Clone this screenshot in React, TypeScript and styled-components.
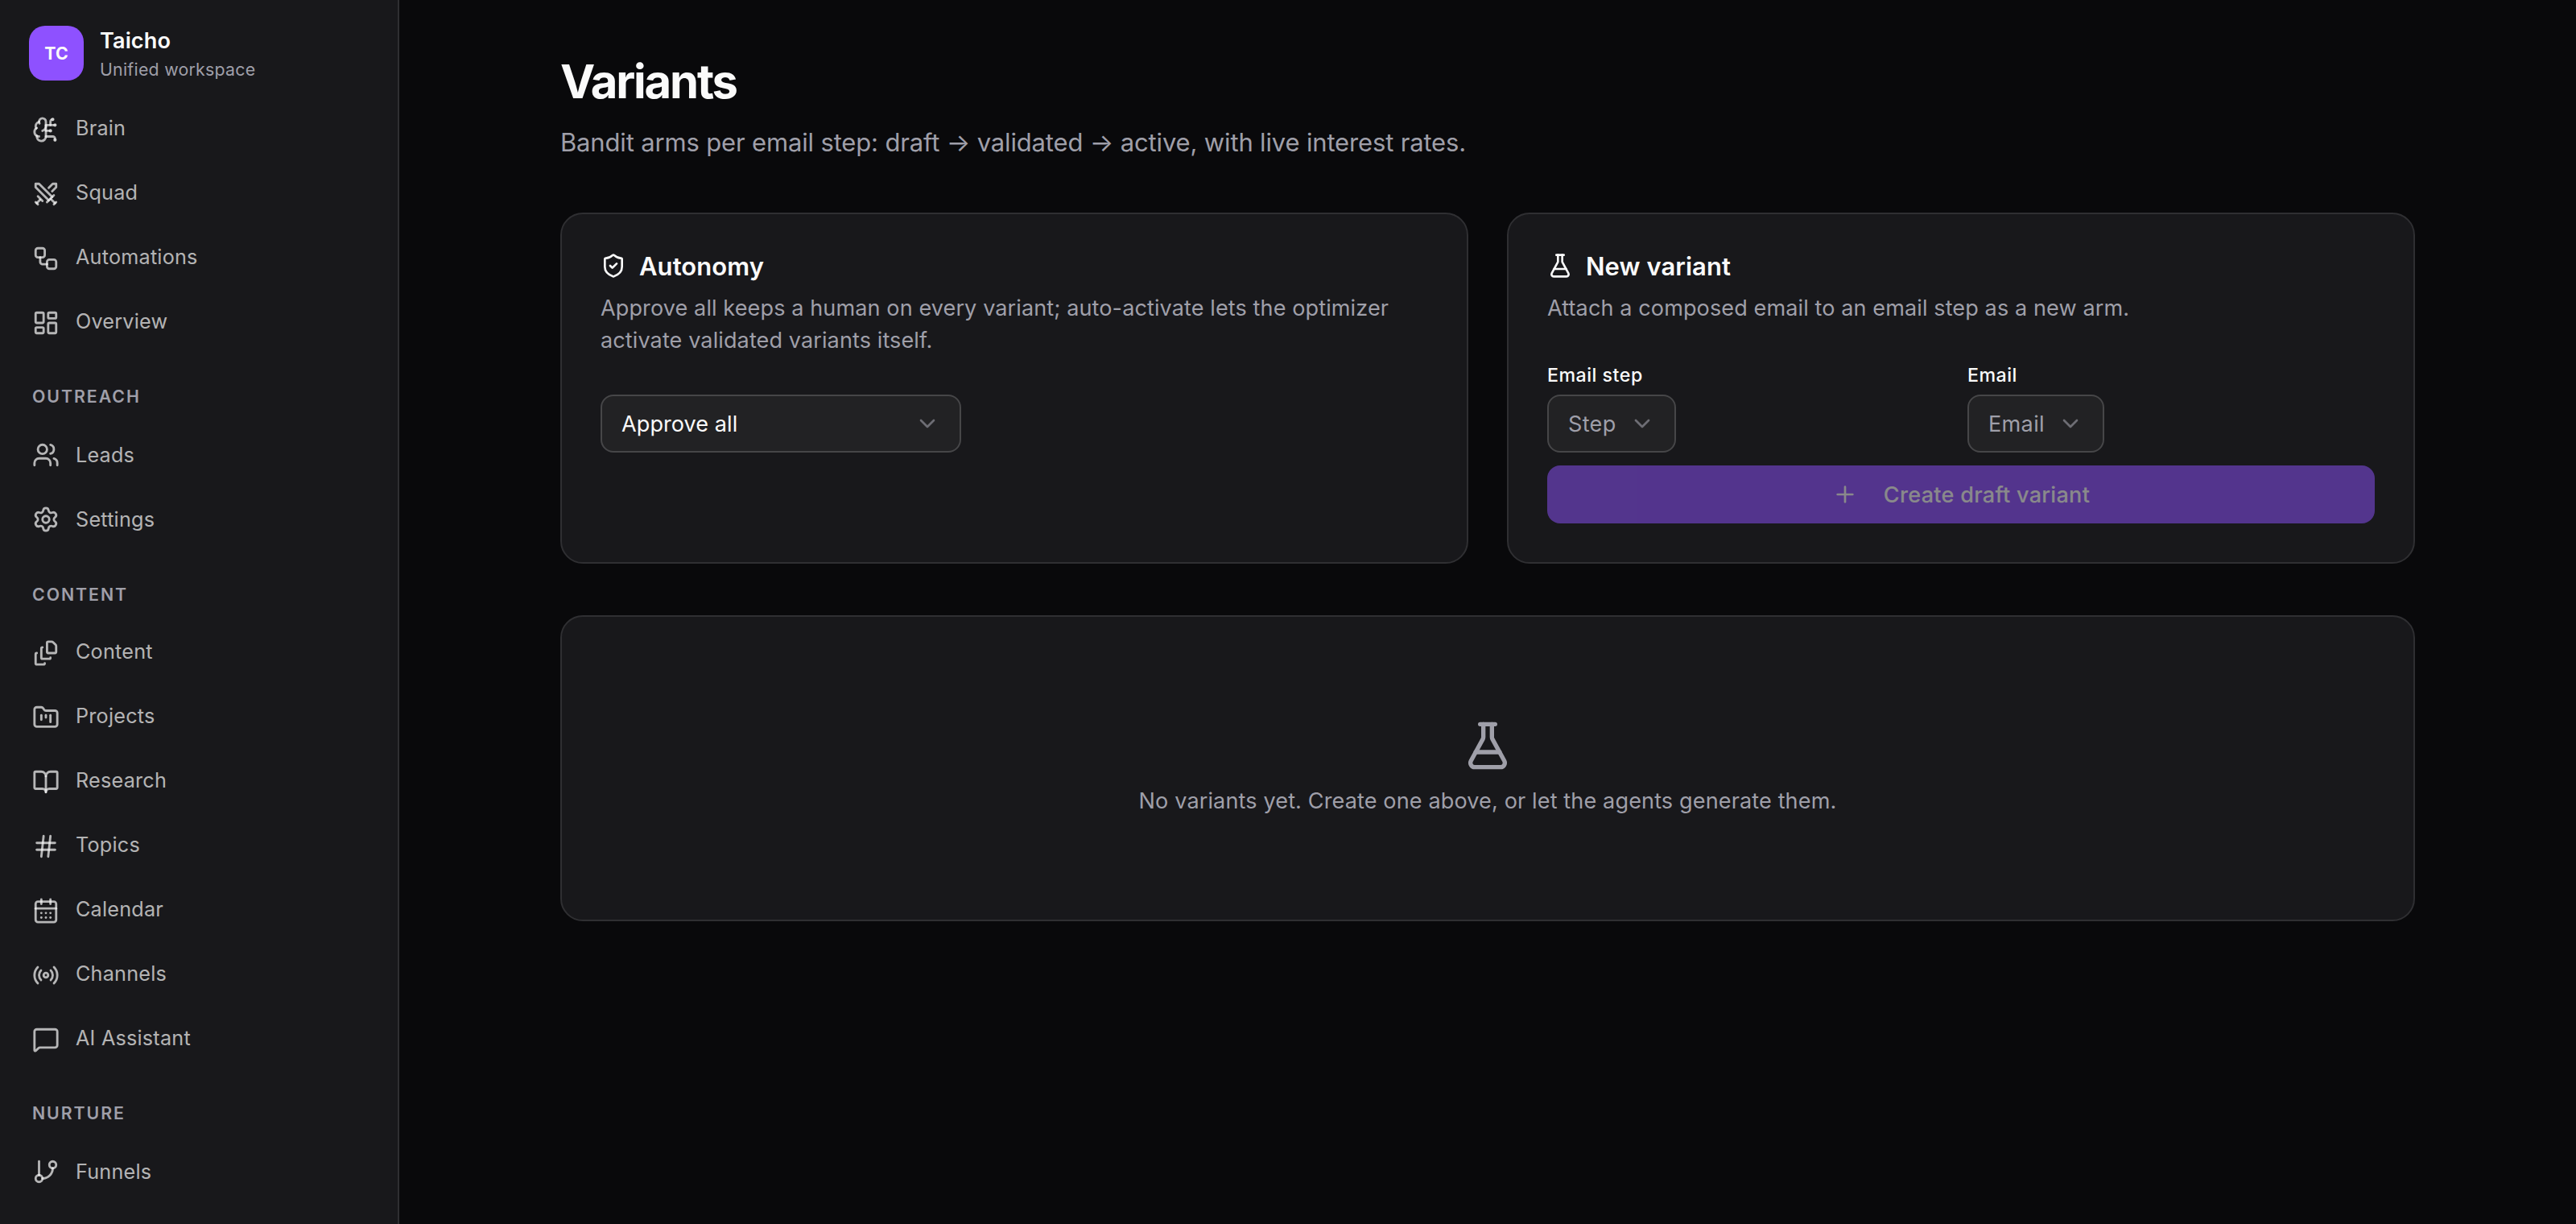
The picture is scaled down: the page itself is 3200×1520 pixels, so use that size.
import React from "react";
import styled, { createGlobalStyle } from "styled-components";
import {
  BookOpen, BrainCircuit, CalendarDays, ChevronDown, FileStack, FlaskConical, FolderKanban, GitBranch,
  Hash, LayoutDashboard, MessageSquare, Plus, Radio, Settings, ShieldCheck, Swords, Users, Workflow,
} from "lucide-react";

const Global = createGlobalStyle`
  *, *::before, *::after { box-sizing: border-box; }
  body { margin: 0; background: #09090b; color: #fafafa; font-family: Inter, "Liberation Sans", sans-serif; -webkit-font-smoothing: antialiased; }
  h1, h2, p { margin: 0; }
  svg { flex: none; display: block; }
`;
const Shell = styled.div`display: flex; height: 1520px; overflow: hidden;`;
const Sidebar = styled.aside`width: 496px; flex: none; background: #18181b; border-right: 2px solid #2f2f32; overflow: hidden;`;
const Workspace = styled.div`display: flex; gap: 20px; padding: 32px 36px 0; height: 119px;`;
const Avatar = styled.div`
  width: 68px; height: 68px; border-radius: 20px; background: #8e51ff;
  display: flex; align-items: center; justify-content: center; font-size: 21.3px; font-weight: 700;
`;
const WorkspaceText = styled.div`display: flex; flex-direction: column;`;
const WorkspaceName = styled.span`font-size: 27.1px; font-weight: 600; line-height: 37px; letter-spacing: 0.1px;`;
const WorkspaceNote = styled.span`font-size: 21.3px; line-height: 34px; letter-spacing: 0.26px; color: #9f9fa9;`;
const Group = styled.div<{ $drop: number }>`
  display: flex; flex-direction: column;
  svg { margin-top: ${(p) => p.$drop}px; }
`;
const GroupLabel = styled.div<{ $height: number }>`
  font-size: 21.3px; font-weight: 600; letter-spacing: 1.95px; color: #9f9fa9;
  padding: 39px 40px 0; line-height: 28px; height: ${(p) => p.$height}px;
`;
const Item = styled.a`
  display: flex; align-items: center; gap: 20px; height: 80px; padding: 0 40px;
  font-size: 25.2px; letter-spacing: 0.22px; color: rgba(250, 250, 250, 0.7);
`;
const Main = styled.main`flex: 1; display: flex; justify-content: center; padding: 64px 0;`;
const Page = styled.div`width: 2304px; display: flex; flex-direction: column; gap: 64px;`;
const Header = styled.header`display: flex; flex-direction: column; gap: 14px; height: 136px;`;
const Title = styled.h1`font-size: 58px; line-height: 74px; font-weight: 700; letter-spacing: -2.2px;`;
const Subtitle = styled.p`font-size: 31px; line-height: 49px; letter-spacing: -0.16px; color: #9f9fa9;`;
const Cards = styled.div`display: grid; grid-template-columns: 1fr 1fr; gap: 48px;`;
const Card = styled.section`background: #18181b; border: 2px solid #2f2f32; border-radius: 28px; padding: 48px; height: 436px;`;
const CardTitle = styled.h2`
  display: flex; align-items: flex-start; gap: 16px; height: 32px;
  font-size: 31px; font-weight: 600; line-height: 33px; letter-spacing: 0.05px;
`;
const CardText = styled.p`margin-top: 16.5px; font-size: 27.1px; line-height: 40px; letter-spacing: 0.08px; color: #9f9fa9;`;
const Form = styled.div`margin-top: 47.5px; display: grid; grid-template-columns: 1fr 1fr; gap: 16px;`;
const Field = styled.div`display: flex; flex-direction: column; align-items: flex-start;`;
const Label = styled.label`font-size: 23.2px; font-weight: 500; line-height: 32px; height: 40px; letter-spacing: 0.5px;`;
const Select = styled.div<{ $width: number; $muted?: boolean }>`
  display: flex; align-items: center; justify-content: space-between; height: 72px; padding: 0 24px;
  width: ${(p) => p.$width}px; border: 2px solid #464648; border-radius: 16px; background: #222224;
  font-size: 27.1px; letter-spacing: ${(p) => (p.$muted ? 0.3 : 0.05)}px; color: ${(p) => (p.$muted ? "#9f9fa9" : "#fafafa")};
  svg { color: #9f9fa9; opacity: 0.6; }
`;
const ControlText = styled.span`padding-top: 1px;`;
const Button = styled.button`
  grid-column: 1 / -1; display: flex; align-items: center; justify-content: center; gap: 32px; height: 72px;
  border: 0; border-radius: 16px; background: #8e51ff; color: #fafafa; opacity: 0.5;
  font-family: inherit; font-size: 27.1px; font-weight: 500; letter-spacing: 0.26px;
`;
const Empty = styled.section`
  display: flex; flex-direction: column; align-items: center; gap: 16px; height: 380px; padding-top: 128px;
  border: 2px solid #2f2f32; border-radius: 28px; background: #18181b; color: #9f9fa9;
`;
const EmptyText = styled.p`font-size: 27.1px; line-height: 41px; letter-spacing: 0.11px;`;

const groups = [
  { label: "", height: 0, drop: 4, items: [["Brain", BrainCircuit], ["Squad", Swords], ["Automations", Workflow], ["Overview", LayoutDashboard]] },
  { label: "OUTREACH", height: 86, drop: 0, items: [["Leads", Users], ["Settings", Settings]] },
  {
    label: "CONTENT", height: 84, drop: 4,
    items: [
      ["Content", FileStack], ["Projects", FolderKanban], ["Research", BookOpen], ["Topics", Hash],
      ["Calendar", CalendarDays], ["Channels", Radio], ["AI Assistant", MessageSquare],
    ],
  },
  { label: "NURTURE", height: 86, drop: 0, items: [["Funnels", GitBranch]] },
] as const;

export default function App() {
  return (
    <>
      <Global />
      <Shell>
        <Sidebar>
          <Workspace>
            <Avatar>TC</Avatar>
            <WorkspaceText>
              <WorkspaceName>Taicho</WorkspaceName>
              <WorkspaceNote>Unified workspace</WorkspaceNote>
            </WorkspaceText>
          </Workspace>
          {groups.map((g) => (
            <Group key={g.label} $drop={g.drop}>
              {g.label && <GroupLabel $height={g.height}>{g.label}</GroupLabel>}
              {g.items.map(([name, Icon]) => (
                <Item key={name}>
                  <Icon size={34} />
                  {name}
                </Item>
              ))}
            </Group>
          ))}
        </Sidebar>
        <Main>
          <Page>
            <Header>
              <Title>Variants</Title>
              <Subtitle>Bandit arms per email step: draft → validated → active, with live interest rates.</Subtitle>
            </Header>
            <Cards>
              <Card>
                <CardTitle><ShieldCheck size={32} />Autonomy</CardTitle>
                <CardText>Approve all keeps a human on every variant; auto-activate lets the optimizer activate validated variants itself.</CardText>
                <Form>
                  <Select $width={448}><ControlText>Approve all</ControlText><ChevronDown size={32} /></Select>
                </Form>
              </Card>
              <Card>
                <CardTitle><FlaskConical size={32} />New variant</CardTitle>
                <CardText>Attach a composed email to an email step as a new arm.</CardText>
                <Form>
                  <Field>
                    <Label>Email step</Label>
                    <Select $muted $width={160}><ControlText>Step</ControlText><ChevronDown size={32} /></Select>
                  </Field>
                  <Field>
                    <Label>Email</Label>
                    <Select $muted $width={170}><ControlText>Email</ControlText><ChevronDown size={32} /></Select>
                  </Field>
                  <Button disabled><Plus size={32} /><ControlText>Create draft variant</ControlText></Button>
                </Form>
              </Card>
            </Cards>
            <Empty>
              <FlaskConical size={64} />
              <EmptyText>No variants yet. Create one above, or let the agents generate them.</EmptyText>
            </Empty>
          </Page>
        </Main>
      </Shell>
    </>
  );
}
